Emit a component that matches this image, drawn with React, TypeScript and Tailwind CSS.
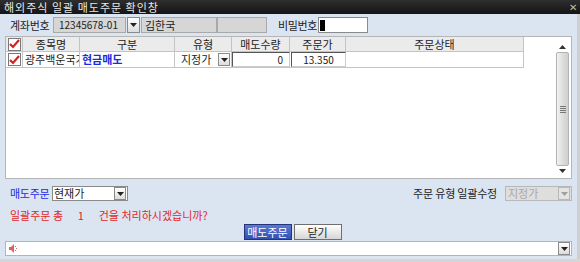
import React from "react";

const font = { fontFamily: '"Noto Sans CJK KR", "Liberation Sans", sans-serif' };

function DropBtn({ disabled = false }: { disabled?: boolean }) {
  return (
    <div
      className={
        "flex h-[13px] w-[12px] shrink-0 items-center justify-center border " +
        (disabled ? "border-[#b8b8b8] bg-[#e4e4e4]" : "border-[#8a8a8a] bg-gradient-to-b from-white to-[#dcdcdc]")
      }
    >
      <svg width="7" height="4" viewBox="0 0 7 4">
        <path d="M0 0h7L3.5 4z" fill={disabled ? "#a0a0a0" : "#222"} />
      </svg>
    </div>
  );
}

function Check() {
  return (
    <div className="flex h-[13px] w-[13px] items-center justify-center border border-[#7a7a7a] bg-white">
      <svg width="11" height="10" viewBox="0 0 11 10">
        <path d="M1 5l3 3 6-7" stroke="#d42020" strokeWidth="2.2" fill="none" />
      </svg>
    </div>
  );
}

function HeadCell({ w, children }: { w: string; children?: React.ReactNode }) {
  return (
    <div className={`${w} flex h-full shrink-0 items-center justify-center whitespace-nowrap border-r border-[#c4c4c4]`}>
      {children}
    </div>
  );
}

export default function App() {
  return (
    <div
      className="flex h-[262px] w-[580px] flex-col overflow-hidden whitespace-nowrap bg-[#cfcfcf] text-[11px] leading-none text-[#222]"
      style={font}
    >
      {/* title bar */}
      <div className="flex h-[14px] shrink-0 items-center justify-between bg-gradient-to-b from-[#2e2e2e] to-[#151515] pl-[4px] pr-[3px]">
        <span className="text-[11px] leading-[12px] tracking-[1px] text-[#e8e8e8]">해외주식 일괄 매도주문 확인창</span>
        <span className="text-[10px] leading-[12px] text-[#bdbdbd]">✕</span>
      </div>

      <div className="mr-[3px] flex flex-1 flex-col bg-[#dbe5f2] px-[5px]">
        {/* account row */}
        <div className="mt-[3px] flex h-[16px] items-center">
          <span className="ml-[5px] w-[43px] tracking-[-0.3px]">계좌번호</span>
          <div className="flex h-[16px] w-[73px] items-center border border-[#a9a9a9] bg-[#d6d6d6] pl-[5px] text-[10px]">
            12345678-01
          </div>
          <div className="ml-[1px] flex h-[16px] w-[13px] items-center justify-center border border-[#8a8a8a] bg-gradient-to-b from-white to-[#dcdcdc]">
            <svg width="7" height="4" viewBox="0 0 7 4">
              <path d="M0 0h7L3.5 4z" fill="#222" />
            </svg>
          </div>
          <div className="ml-[1px] flex h-[16px] w-[76px] items-center border border-[#a9a9a9] bg-[#d6d6d6] pl-[3px]">
            김한국
          </div>
          <div className="h-[16px] w-[50px] border border-[#a9a9a9] bg-[#d6d6d6]" />
          <span className="ml-[11px] w-[40px] tracking-[-0.4px]">비밀번호</span>
          <div className="flex h-[16px] w-[50px] items-center border border-[#8a8a8a] bg-white pl-[1px]">
            <div className="h-[11px] w-[5px] bg-black" />
          </div>
        </div>

        {/* grid */}
        <div className="mt-[3px] flex h-[143px] border border-[#b5b5b5] bg-white">
          <div className="flex flex-1 flex-col">
            <div className="flex h-[15px] w-[518px] border-b border-[#c4c4c4] bg-[#ebebeb]">
              <HeadCell w="w-[17px]">
                <Check />
              </HeadCell>
              <HeadCell w="w-[57px]">종목명</HeadCell>
              <HeadCell w="w-[95px]">구분</HeadCell>
              <HeadCell w="w-[57px]">유형</HeadCell>
              <HeadCell w="w-[58px]">매도수량</HeadCell>
              <HeadCell w="w-[56px]">주문가</HeadCell>
              <HeadCell w="w-[178px]">주문상태</HeadCell>
            </div>
            <div className="flex h-[16px] w-[518px] border-b border-[#c4c4c4]">
              <HeadCell w="w-[17px]">
                <Check />
              </HeadCell>
              <div className="flex h-full w-[57px] shrink-0 items-center overflow-hidden border-r border-[#c4c4c4] pl-[2px]">
                <span className="block w-[54px] overflow-hidden">광주백운국가</span>
              </div>
              <div className="flex h-full w-[95px] shrink-0 items-center border-r border-[#c4c4c4] pl-[2px] font-semibold text-[#1a2be0]">
                현금매도
              </div>
              <div className="flex h-full w-[57px] shrink-0 items-center justify-between border-r border-[#c4c4c4] pl-[6px] pr-[1px]">
                지정가
                <DropBtn />
              </div>
              <div className="flex h-full w-[58px] shrink-0 items-center justify-end border-[1.5px] border-[#555] border-r-[#ccc] border-b-[#ccc] pr-[6px] text-[10px]">
                0
              </div>
              <div className="ml-[1px] flex h-full w-[55px] shrink-0 items-center justify-center border-[1.5px] border-[#555] border-r-[#ccc] border-b-[#ccc] text-[10px]">
                13.350
              </div>
              <div className="h-full w-[178px] shrink-0 border-r border-[#c4c4c4]" />
            </div>
          </div>
          {/* scrollbar */}
          <div className="mr-[2px] flex w-[13px] flex-col items-center pt-[5px] pb-[2px]">
            <div className="flex h-[10px] items-center">
              <svg width="7" height="4" viewBox="0 0 7 4">
                <path d="M3.5 0L7 4H0z" fill="#333" />
              </svg>
            </div>
            <div className="flex w-[13px] flex-1 items-center justify-center rounded-[2px] border border-[#b2b2b2] bg-gradient-to-r from-[#f2f2f2] via-[#dedede] to-[#cfcfcf]">
              <div className="flex flex-col gap-[1px]">
                <div className="h-px w-[6px] bg-[#777]" />
                <div className="h-px w-[6px] bg-[#777]" />
                <div className="h-px w-[6px] bg-[#777]" />
                <div className="h-px w-[6px] bg-[#777]" />
              </div>
            </div>
            <div className="flex h-[10px] items-center">
              <svg width="7" height="4" viewBox="0 0 7 4">
                <path d="M0 0h7L3.5 4z" fill="#333" />
              </svg>
            </div>
          </div>
        </div>

        {/* order type row */}
        <div className="mt-[7px] flex h-[15px] items-center">
          <span className="ml-[5px] w-[42px] tracking-[-0.3px] text-[#1a2be0]">매도주문</span>
          <div className="flex h-[15px] w-[76px] items-center justify-between border border-[#8a8a8a] bg-white pl-[1px] pr-[1px]">
            현재가
            <DropBtn />
          </div>
          <div className="flex-1" />
          <span className="mr-[8px] tracking-[-0.2px]">주문 유형 일괄수정</span>
          <div className="flex h-[15px] w-[67px] items-center justify-between border border-[#b8b8b8] bg-[#dedede] pl-[2px] pr-[1px] text-[#a8a8a8]">
            지정가
            <DropBtn disabled />
          </div>
        </div>

        <div className="mt-[9px] ml-[5px] whitespace-pre text-[#e02828]">일괄주문 총      1      건을 처리하시겠습니까?</div>

        {/* buttons */}
        <div className="mt-[3px] flex justify-center gap-[2px] pl-[8px]">
          <div className="flex h-[16px] w-[48px] items-center justify-center border border-[#23347a] bg-gradient-to-b from-[#5b78d2] to-[#3451b0] text-white">
            매도주문
          </div>
          <div className="flex h-[16px] w-[48px] items-center justify-center border border-[#6f6f6f] bg-gradient-to-b from-white to-[#d6d6d6]">
            닫기
          </div>
        </div>

        <div className="flex-1" />
      </div>

      {/* message bar */}
      <div className="mr-[3px] flex h-[19px] shrink-0 items-start bg-[#dbe5f2] pt-[1px]">
        <div className="mx-[5px] flex h-[15px] flex-1 items-center justify-between border border-[#b5b5b5] bg-white pl-[3px] pr-[1px]">
          <svg width="9" height="9" viewBox="0 0 9 9">
            <path d="M0 3h2l3-3v9L2 6H0z" fill="#e06060" />
            <path d="M6.5 2v1M7.5 4v1M6.5 6v1" stroke="#e06060" />
          </svg>
          <DropBtn />
        </div>
      </div>
      <div className="h-[5px] shrink-0 bg-[#d6d6d6]" />
    </div>
  );
}
